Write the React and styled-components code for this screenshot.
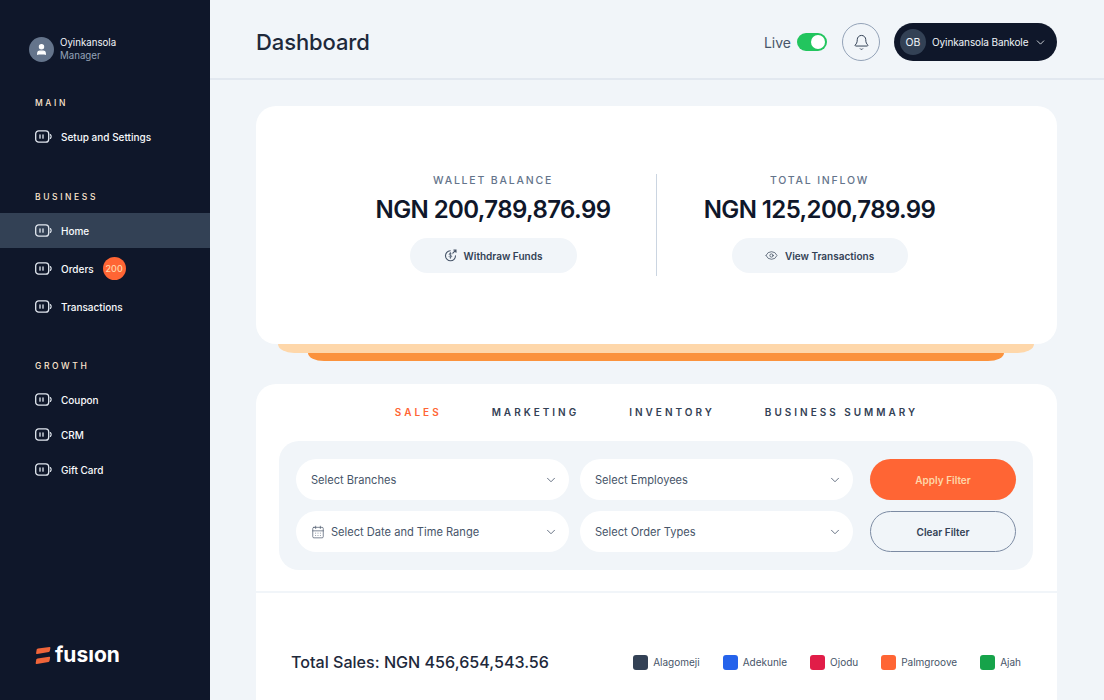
import React from 'react';
import styled, { createGlobalStyle } from 'styled-components';
import { ChevronDown, Bell, Eye, CalendarDays, User } from 'lucide-react';

const GlobalStyle = createGlobalStyle`
	* { box-sizing: border-box; }
	html, body { margin: 0; height: 100%; overflow: hidden; }
	body { font-family: Inter, "Noto Sans", sans-serif; background: #f1f5f9; color: #0f172a; }
`;

const Page = styled.div`
	display: flex;
	width: 1104px;
	height: 700px;
	overflow: hidden;
`;

const Sidebar = styled.aside`
	flex: 0 0 210px;
	display: flex;
	flex-direction: column;
	background: #0f172a;
	padding-top: 36px;
	height: 700px;
`;

const Profile = styled.div`
	display: flex;
	align-items: center;
	gap: 6px;
	padding-left: 29px;
	height: 26px;
`;

const ProfileAvatar = styled.div`
	width: 25px;
	height: 25px;
	border-radius: 50%;
	background: #64748b;
	color: #fff;
	display: flex;
	align-items: center;
	justify-content: center;
`;

const ProfileName = styled.div`
	font-size: 9.7px;
	line-height: 13px;
	color: #f1f5f9;
`;

const ProfileRole = styled.div`
	font-size: 9.7px;
	line-height: 13px;
	color: #94a3b8;
`;

const SectionLabel = styled.div`
	font-size: 8.5px;
	font-weight: 500;
	letter-spacing: 2.6px;
	line-height: 12px;
	color: #fde6cf;
	padding-left: 35px;
	margin-top: ${p => p.$top}px;
	margin-bottom: ${p => p.$bottom}px;
`;

const NavItem = styled.div`
	display: flex;
	align-items: center;
	height: ${p => p.$height || 35}px;
	padding-left: 35px;
	background: ${p => (p.$active ? '#334155' : 'transparent')};
	color: #f8fafc;
	font-size: 10px;
	font-weight: 500;
`;

const NavLabel = styled.span`
	margin-left: 9px;
`;

const Badge = styled.span`
	width: 23px;
	height: 23px;
	margin-left: 9px;
	border-radius: 50%;
	background: #ff6534;
	color: #fed7aa;
	font-size: 9px;
	display: flex;
	align-items: center;
	justify-content: center;
`;

const Logo = styled.div`
	display: flex;
	align-items: center;
	gap: 4px;
	margin-top: auto;
	margin-bottom: 32px;
	padding-left: 35px;
	color: #fff;
	font-size: 21px;
	font-weight: 700;
	line-height: 26px;
`;

const Main = styled.main`
	flex: 1;
	min-width: 0;
	display: flex;
	flex-direction: column;
`;

const Header = styled.header`
	flex: 0 0 80px;
	display: flex;
	align-items: center;
	padding: 6px 47px 0 46px;
	border-bottom: 2px solid #e2e8f0;
`;

const Title = styled.h1`
	margin: 0 auto 0 0;
	font-size: 22px;
	font-weight: 500;
	color: #1e293b;
	letter-spacing: -0.1px;
`;

const LiveLabel = styled.span`
	font-size: 14px;
	color: #475569;
	margin-right: 6px;
`;

const Toggle = styled.div`
	width: 30px;
	height: 18px;
	border-radius: 9px;
	background: #22c55e;
	padding: 2px;
	display: flex;
	justify-content: flex-end;
	margin-right: 15px;
`;

const ToggleKnob = styled.div`
	width: 14px;
	height: 14px;
	border-radius: 50%;
	background: #fff;
`;

const BellButton = styled.div`
	width: 38px;
	height: 38px;
	border-radius: 50%;
	border: 1px solid #94a3b8;
	display: flex;
	align-items: center;
	justify-content: center;
	color: #334155;
	margin-right: 14px;
`;

const UserPill = styled.div`
	width: 163px;
	height: 38px;
	border-radius: 19px;
	background: #0f172a;
	color: #f1f5f9;
	display: flex;
	align-items: center;
	padding-left: 6px;
	font-size: 10px;
	font-weight: 400;
`;

const UserInitials = styled.div`
	width: 26px;
	height: 26px;
	border-radius: 50%;
	background: #334155;
	display: flex;
	align-items: center;
	justify-content: center;
	font-size: 10.5px;
	margin-right: 6px;
`;

const UserName = styled.span`
	width: 96px;
	margin-right: 6px;
	white-space: nowrap;
	letter-spacing: -0.1px;
`;

const Content = styled.div`
	padding: 26px 47px 0 46px;
`;

const HeroCard = styled.section`
	height: 238px;
	background: #fff;
	border-radius: 20px;
	display: flex;
	align-items: center;
	justify-content: center;
`;

const Balance = styled.div`
	width: 326px;
	display: flex;
	flex-direction: column;
	align-items: center;
	padding-bottom: 3px;
	padding-right: ${p => (p.$trim ? 1 : 0)}px;
`;

const BalanceDivider = styled.div`
	width: 1px;
	height: 102px;
	background: #cbd5e1;
`;

const BalanceLabel = styled.div`
	font-size: 10.5px;
	font-weight: 500;
	letter-spacing: 1.8px;
	line-height: 14px;
	color: #64748b;
`;

const BalanceValue = styled.div`
	font-size: 24px;
	font-weight: 600;
	line-height: 30px;
	letter-spacing: -0.6px;
	margin-top: 7px;
	color: #0f172a;
	white-space: nowrap;
`;

const GhostButton = styled.div`
	margin-top: 13px;
	height: 35px;
	width: ${p => p.$width}px;
	border-radius: 18px;
	background: #f1f5f9;
	display: flex;
	align-items: center;
	justify-content: center;
	gap: 7px;
	font-size: 10px;
	font-weight: 600;
	color: #334155;
`;

const StackLight = styled.div`
	margin: 0 23px 0 22px;
	height: 9px;
	background: #fed7aa;
	border-radius: 0 0 16px 16px / 0 0 9px 9px;
`;

const StackDark = styled.div`
	margin: 0 53px 0 52px;
	height: 8px;
	background: #fb923c;
	border-radius: 0 0 16px 16px / 0 0 8px 8px;
`;

const SalesCard = styled.section`
	margin-top: 23px;
	height: 340px;
	background: #fff;
	border-radius: 20px 20px 0 0;
	display: flex;
	flex-direction: column;
`;

const Tabs = styled.div`
	display: flex;
	justify-content: center;
	gap: 50px;
	padding-top: 21px;
	height: 57px;
`;

const Tab = styled.div`
	font-size: 10px;
	font-weight: 600;
	letter-spacing: 3px;
	line-height: 14px;
	color: ${p => (p.$active ? '#ff6534' : '#334155')};
`;

const FilterPanel = styled.div`
	margin: 0 24px 0 23px;
	height: 129px;
	border-radius: 20px;
	background: #f1f5f9;
	padding: 18px 17px;
	display: grid;
	grid-template-columns: 273px 273px 1fr;
	grid-auto-rows: 41px;
	column-gap: 11px;
	row-gap: 11px;
`;

const Select = styled.div`
	background: #fff;
	border-radius: 21px;
	display: flex;
	align-items: center;
	padding: 0 11px 0 15px;
	font-size: 11.1px;
	color: #475569;
	gap: 6px;
`;

const SelectText = styled.span`
	flex: 1;
`;

const FilterButton = styled.div`
	margin-left: 6px;
	border-radius: 21px;
	display: flex;
	align-items: center;
	justify-content: center;
	font-size: 10px;
	font-weight: 600;
	background: ${p => (p.$primary ? '#ff6534' : 'transparent')};
	color: ${p => (p.$primary ? '#fed7aa' : '#334155')};
	border: ${p => (p.$primary ? '0' : '1.5px solid #7c8ba3')};
`;

const Divider = styled.div`
	height: 2px;
	background: #f1f5f9;
	margin-top: 21px;
`;

const TotalRow = styled.div`
	display: flex;
	align-items: center;
	justify-content: space-between;
	padding: 59px 36px 0 35px;
`;

const TotalText = styled.div`
	font-size: 16.1px;
	font-weight: 500;
	color: #1e293b;
`;

const Legend = styled.div`
	display: flex;
	gap: 23px;
`;

const LegendItem = styled.div`
	display: flex;
	align-items: center;
	gap: 5px;
	font-size: 10px;
	color: #475569;
`;

const Swatch = styled.span`
	width: 15px;
	height: 15px;
	border-radius: 3px;
	background: ${p => p.$color};
`;

const NavIcon = () => (
	<svg width="17" height="13" viewBox="0 0 17 13" fill="none" stroke="#e2e8f0" strokeWidth="1.3" strokeLinecap="round">
		<rect x="0.7" y="0.8" width="13" height="11.4" rx="3" />
		<path d="M5 4.8v3.4M8 4.8v3.4" />
		<path d="M15.4 4.6c.9.9.9 2.9 0 3.8" />
	</svg>
);

const LogoMark = () => (
	<svg width="16" height="17" viewBox="0 0 16 17" fill="#f0653a">
		<path d="M3 1.6 14.6 0c.6 0 .9.3.8.9l-.6 3.2c-.1.5-.4.8-.9.9L2.200 7c-.8.100-1.200-.3-1.100-1l.5-3c.1-.8.600-1.300 1.400-1.400z" />
		<path d="M2.600 11.600 14.200 9.800c.7-.1 1 .2.900.9l-.6 3.300c-.1.500-.4.800-.9.900L1.800 17c-.8.100-1.200-.3-1.100-1l.5-3c.1-.8.600-1.300 1.400-1.400z" />
	</svg>
);

const WithdrawIcon = () => (
	<svg width="13" height="13" viewBox="0 0 13 13" fill="none" stroke="#475569" strokeWidth="1.1" strokeLinecap="round">
		<path d="M11.500 6.800a5 5 0 1 1-5.300-5" />
		<path d="M8.800 4.200 12 1M9.800 1H12v2.200" />
		<path d="M7.600 5c-.3-.5-.7-.7-1.200-.7-.7 0-1.200.4-1.200 1 0 1.300 2.500.7 2.500 2 0 .6-.5 1-1.300 1-.6 0-1-.3-1.300-.7M6.400 3.600v5.800" strokeWidth="0.8" />
	</svg>
);

const legend = [
	['Alagomeji', '#334155'],
	['Adekunle', '#2563eb'],
	['Ojodu', '#e11d48'],
	['Palmgroove', '#ff6534'],
	['Ajah', '#16a34a'],
];

const App = () => (
	<Page>
		<GlobalStyle />
		<Sidebar>
			<Profile>
				<ProfileAvatar>
					<User size={13} fill="#fff" />
				</ProfileAvatar>
				<div>
					<ProfileName>Oyinkansola</ProfileName>
					<ProfileRole>Manager</ProfileRole>
				</div>
			</Profile>
			<SectionLabel $top={35} $bottom={10}>MAIN</SectionLabel>
			<NavItem><NavIcon /><NavLabel>Setup and Settings</NavLabel></NavItem>
			<SectionLabel $top={37} $bottom={10}>BUSINESS</SectionLabel>
			<NavItem $active><NavIcon /><NavLabel>Home</NavLabel></NavItem>
			<NavItem $height={41}><NavIcon /><NavLabel>Orders</NavLabel><Badge>200</Badge></NavItem>
			<NavItem><NavIcon /><NavLabel>Transactions</NavLabel></NavItem>
			<SectionLabel $top={36} $bottom={10}>GROWTH</SectionLabel>
			<NavItem><NavIcon /><NavLabel>Coupon</NavLabel></NavItem>
			<NavItem><NavIcon /><NavLabel>CRM</NavLabel></NavItem>
			<NavItem><NavIcon /><NavLabel>Gift Card</NavLabel></NavItem>
			<Logo><LogoMark />fusıon</Logo>
		</Sidebar>
		<Main>
			<Header>
				<Title>Dashboard</Title>
				<LiveLabel>Live</LiveLabel>
				<Toggle><ToggleKnob /></Toggle>
				<BellButton><Bell size={17} strokeWidth={1.4} /></BellButton>
				<UserPill>
					<UserInitials>OB</UserInitials>
					<UserName>Oyinkansola Bankole</UserName>
					<ChevronDown size={13} strokeWidth={1.5} />
				</UserPill>
			</Header>
			<Content>
				<HeroCard>
					<Balance>
						<BalanceLabel>WALLET BALANCE</BalanceLabel>
						<BalanceValue>NGN 200,789,876.99</BalanceValue>
						<GhostButton $width={167}><WithdrawIcon />Withdraw Funds</GhostButton>
					</Balance>
					<BalanceDivider />
					<Balance $trim>
						<BalanceLabel>TOTAL INFLOW</BalanceLabel>
						<BalanceValue>NGN 125,200,789.99</BalanceValue>
						<GhostButton $width={176}><Eye size={13} strokeWidth={1.3} />View Transactions</GhostButton>
					</Balance>
				</HeroCard>
				<StackLight />
				<StackDark />
				<SalesCard>
					<Tabs>
						<Tab $active>SALES</Tab>
						<Tab>MARKETING</Tab>
						<Tab>INVENTORY</Tab>
						<Tab>BUSINESS SUMMARY</Tab>
					</Tabs>
					<FilterPanel>
						<Select><SelectText>Select Branches</SelectText><ChevronDown size={14} strokeWidth={1.4} /></Select>
						<Select><SelectText>Select Employees</SelectText><ChevronDown size={14} strokeWidth={1.4} /></Select>
						<FilterButton $primary>Apply Filter</FilterButton>
						<Select><CalendarDays size={14} strokeWidth={1.2} /><SelectText>Select Date and Time Range</SelectText><ChevronDown size={14} strokeWidth={1.4} /></Select>
						<Select><SelectText>Select Order Types</SelectText><ChevronDown size={14} strokeWidth={1.4} /></Select>
						<FilterButton>Clear Filter</FilterButton>
					</FilterPanel>
					<Divider />
					<TotalRow>
						<TotalText>Total Sales: NGN 456,654,543.56</TotalText>
						<Legend>
							{legend.map(([name, color]) => (
								<LegendItem key={name}><Swatch $color={color} />{name}</LegendItem>
							))}
						</Legend>
					</TotalRow>
				</SalesCard>
			</Content>
		</Main>
	</Page>
);

export default App;
